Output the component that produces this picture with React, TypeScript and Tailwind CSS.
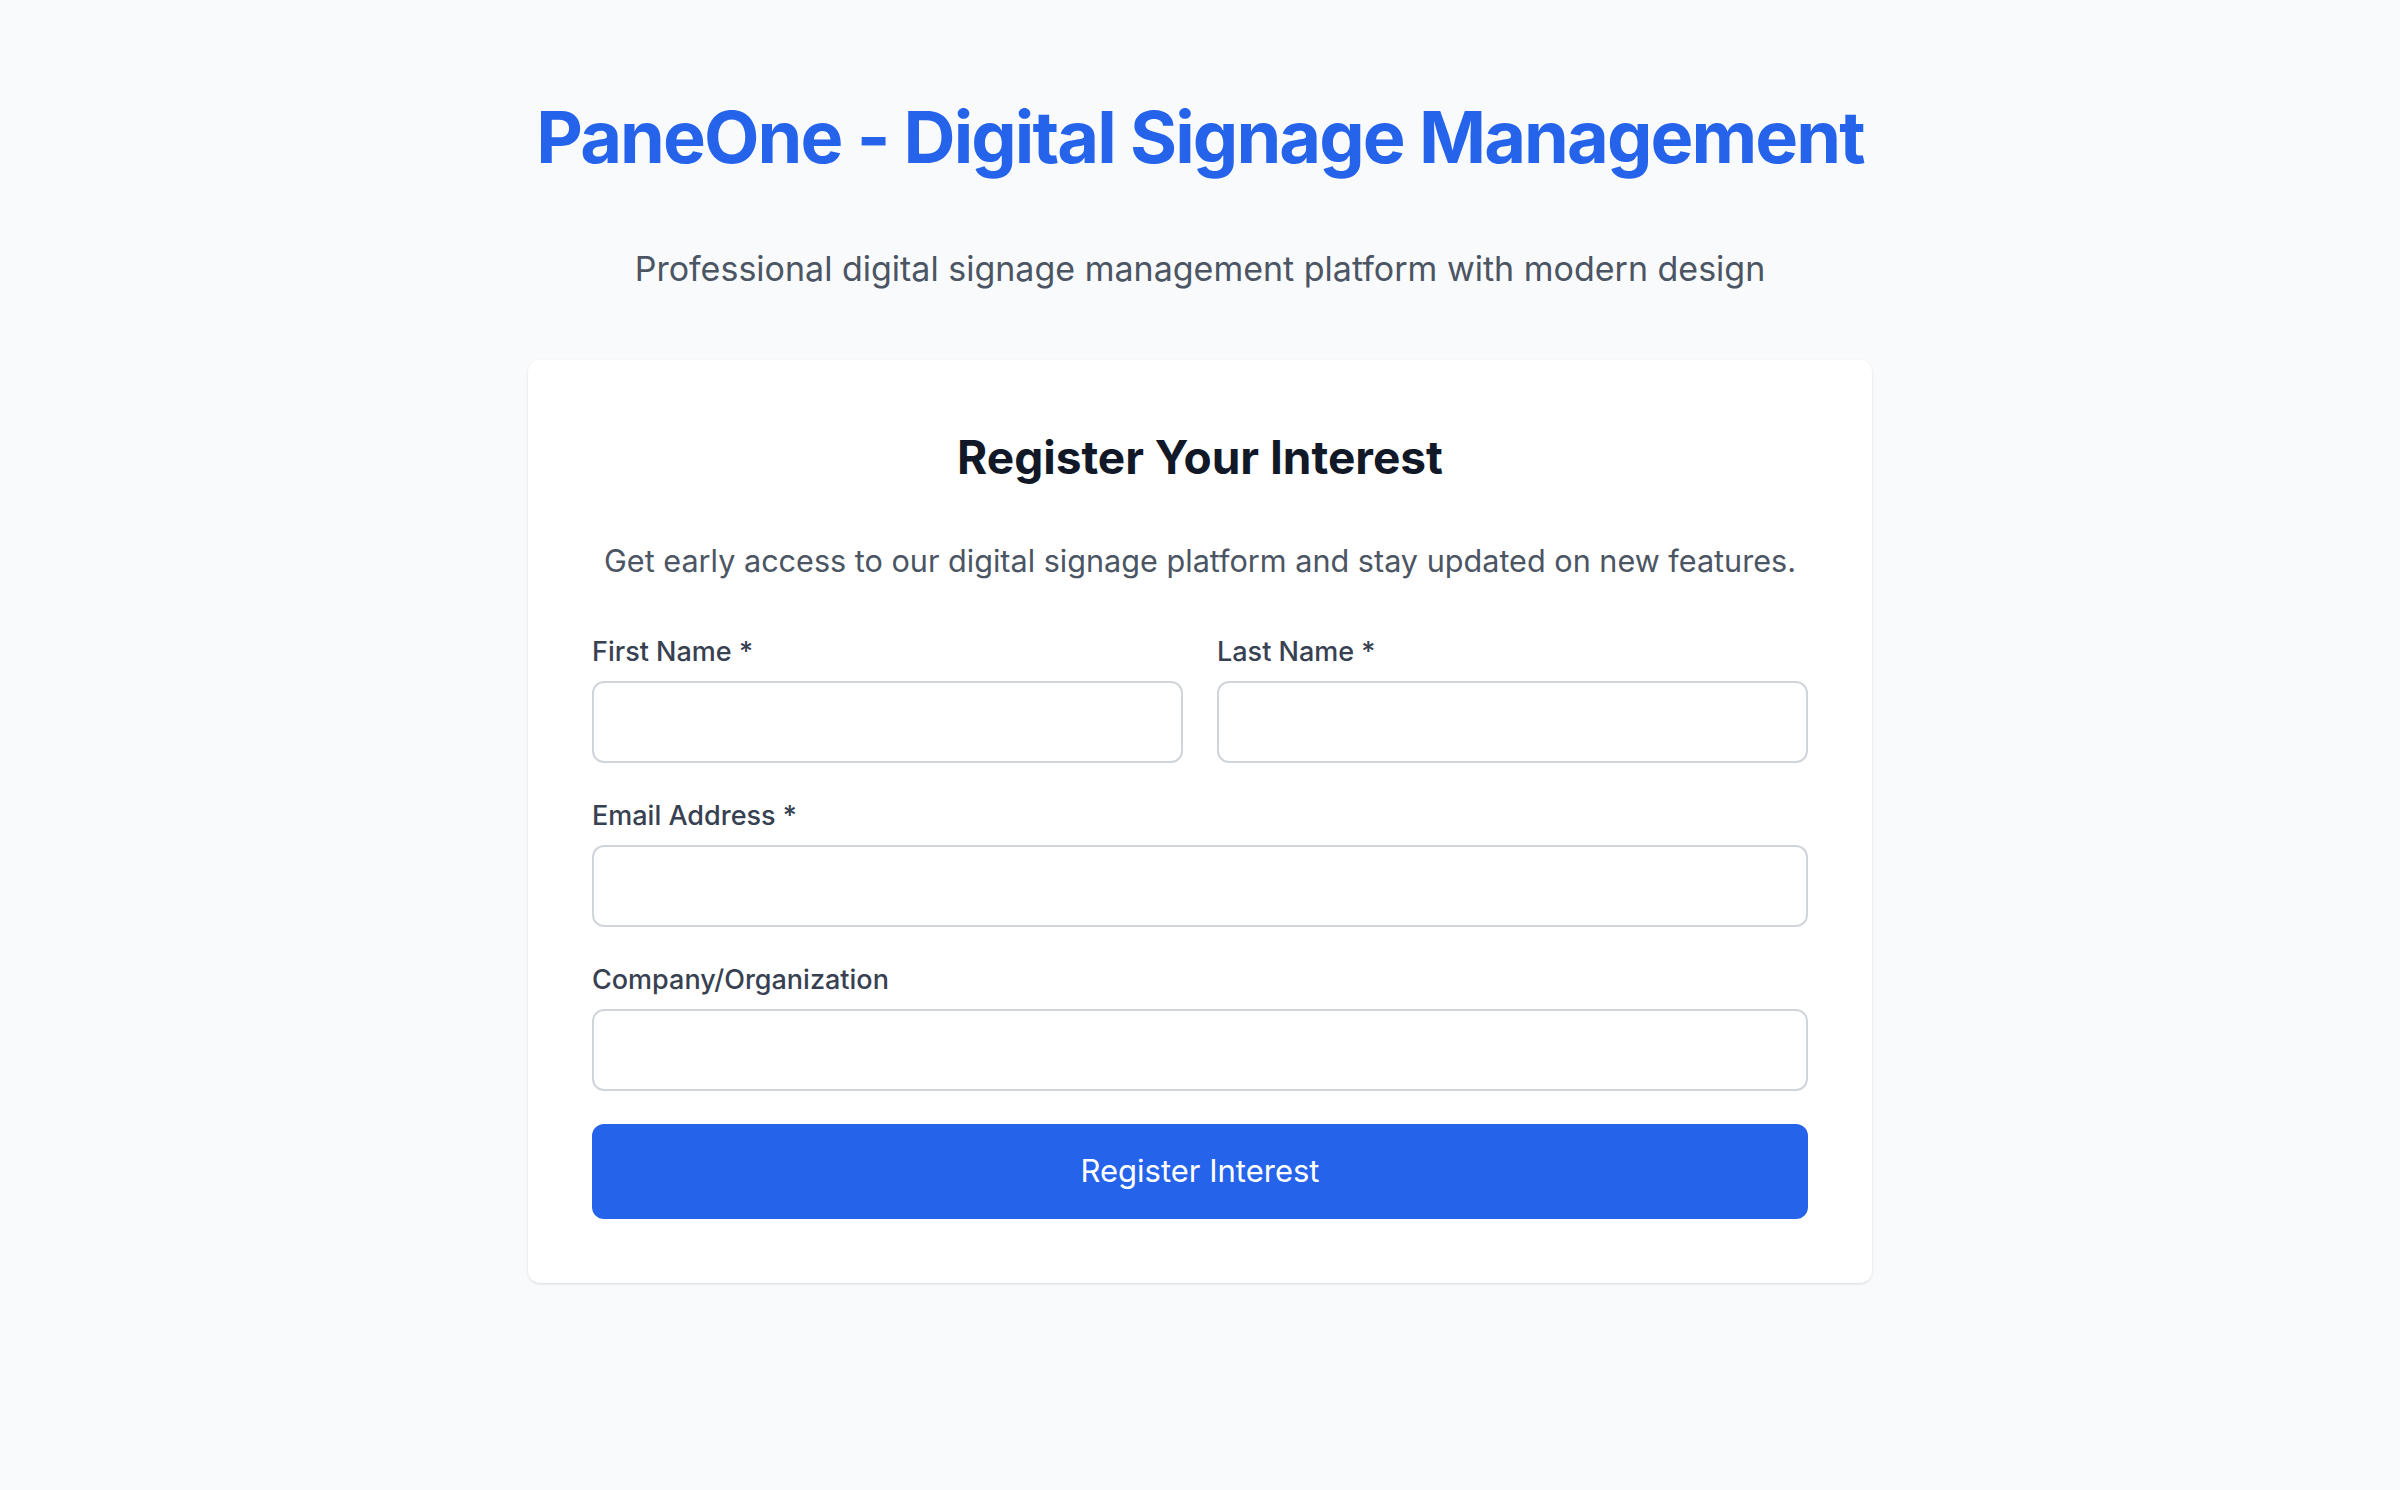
import { useState } from "react";

type FieldProps = {
  label: string;
  type?: string;
  value: string;
  onChange: (v: string) => void;
};

function Field({ label, type = "text", value, onChange }: FieldProps) {
  return (
    <label className="flex flex-col gap-[12px]">
      <span className="text-[27px] leading-[34px] font-medium text-[#374151]">{label}</span>
      <input
        type={type}
        value={value}
        onChange={(e) => onChange(e.target.value)}
        className="h-[82px] w-full rounded-[12px] border-2 border-[#d1d5db] bg-white px-[24px] text-[27px] text-[#111827] outline-none"
      />
    </label>
  );
}

export default function App() {
  const [firstName, setFirstName] = useState("");
  const [lastName, setLastName] = useState("");
  const [email, setEmail] = useState("");
  const [company, setCompany] = useState("");

  return (
    <div
      className="min-h-screen bg-[#f9fafb] pt-[101px] pb-[120px]"
      style={{ fontFamily: "Inter, 'Noto Sans', sans-serif" }}
    >
      <div className="mx-auto flex w-[1344px] flex-col items-center">
        <h1 className="whitespace-nowrap text-[72px] leading-[72px] font-bold tracking-[-1.9px] text-[#2563eb]">
          PaneOne - Digital Signage Management
        </h1>
        <p className="mt-[72px] whitespace-nowrap text-[34px] leading-[48px] text-[#4b5563]">
          Professional digital signage management platform with modern design
        </p>

        {/* Registration card */}
        <div className="mt-[67px] w-full rounded-[12px] bg-white px-[64px] pt-[69px] pb-[64px] shadow-sm">
          <h2 className="text-center text-[46px] leading-[56px] font-bold text-[#111827]">
            Register Your Interest
          </h2>
          <p className="mt-[54px] whitespace-nowrap text-center text-[30.6px] leading-[44px] text-[#4b5563]">
            Get early access to our digital signage platform and stay updated on new features.
          </p>

          <form className="mt-[52px] flex flex-col gap-[36px]" onSubmit={(e) => e.preventDefault()}>
            <div className="grid grid-cols-2 gap-[34px]">
              <Field label="First Name *" value={firstName} onChange={setFirstName} />
              <Field label="Last Name *" value={lastName} onChange={setLastName} />
            </div>
            <Field label="Email Address *" type="email" value={email} onChange={setEmail} />
            <Field label="Company/Organization" value={company} onChange={setCompany} />
            <button
              type="submit"
              className="-mt-[3px] h-[95px] w-full rounded-[12px] bg-[#2563eb] text-[31px] text-white"
            >
              Register Interest
            </button>
          </form>
        </div>
      </div>
    </div>
  );
}
